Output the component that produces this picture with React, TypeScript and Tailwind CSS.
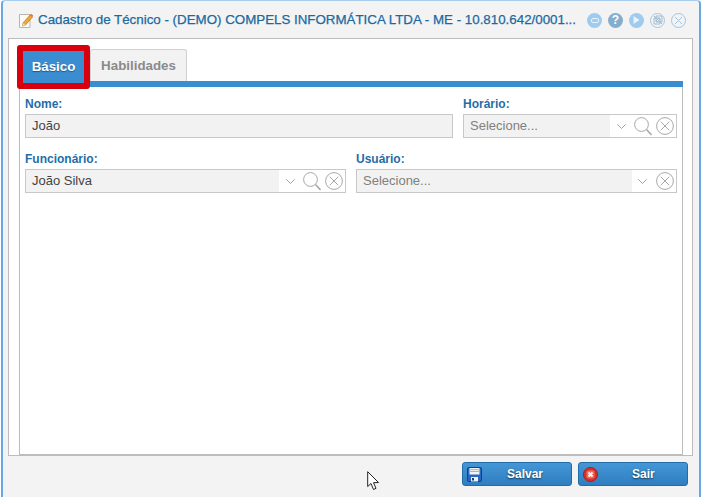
import React from "react";

const F = "font-['Liberation_Sans',Arial,sans-serif]";

function Chevron() {
  return (
    <svg width="9" height="5" viewBox="0 0 9 5" className="shrink-0" fill="none" stroke="#a3a3a3" strokeWidth="1">
      <path d="M0.3 0.3 L4.5 4.5 L8.7 0.3" />
    </svg>
  );
}
function SearchIcon() {
  return (
    <svg width="18" height="19" viewBox="0 0 18 19" className="ml-[8px] mt-[1px] shrink-0" fill="none" stroke="#a8a8a8">
      <circle cx="7.5" cy="7.5" r="6.9" strokeWidth="1" />
      <path d="M12.5 12.5 L17.5 18" strokeWidth="1.6" />
    </svg>
  );
}
function ClearIcon({ cls }: { cls: string }) {
  return (
    <svg width="18" height="18" viewBox="0 0 18 18" className={`${cls} shrink-0`} fill="none" stroke="#a8a8a8" strokeWidth="1">
      <circle cx="9" cy="9" r="8.4" />
      <path d="M4.7 4.7 L13.3 13.3 M13.3 4.7 L4.7 13.3" />
    </svg>
  );
}

function Label({ children }: { children: React.ReactNode }) {
  return <div className="h-[17px] text-[12px] leading-[15px] font-bold text-[#1f6ea8]">{children}</div>;
}

function Select({ label, value, search, width, grayWidth, placeholder }: { label: string; value: string; search?: boolean; width: string; grayWidth: string; placeholder?: boolean }) {
  return (
    <div className={width}>
      <Label>{label}</Label>
      <div className="flex h-[24px] items-stretch border border-[#c8c8c8] bg-white">
        <div className={`${grayWidth} flex items-center bg-[#f2f2f2] pl-[6px] text-[13px] ${placeholder ? "text-[#808080]" : "text-[#444444]"}`}>{value}</div>
        <div className="flex flex-1 items-center justify-end pr-[2px]">
          <Chevron />
          {search && <SearchIcon />}
          <ClearIcon cls={search ? "ml-[4px]" : "ml-[9px]"} />
        </div>
      </div>
    </div>
  );
}

function CircleBtn({ children, cls }: { children: React.ReactNode; cls: string }) {
  return <div className={`flex h-[15px] w-[15px] items-center justify-center rounded-full ${cls}`}>{children}</div>;
}

function Btn({ label, icon, width, pad }: { label: string; icon: React.ReactNode; width: string; pad: string }) {
  return (
    <div className={`relative flex h-[24px] ${width} items-center rounded-[3px] border border-[#1f6ea8] bg-gradient-to-b from-[#4596d6] to-[#2f7fc0] pl-[4px]`}>
      {icon}
      <span className={`${pad} text-[12px] font-bold text-white [text-shadow:0_1px_2px_rgba(0,0,0,0.6)]`}>{label}</span>
    </div>
  );
}

export default function App() {
  return (
    <div className={`${F} relative h-[497px] w-[702px] overflow-hidden bg-white`}>
      <div className="ml-px flex h-[497px] w-[700px] flex-col rounded-t-[4px] border-x-[2px] border-t border-x-[#69a9e1] border-t-[#a9cdec] bg-[#f3f3f3]">
        {/* Title bar */}
        <div className="flex h-[37px] shrink-0 items-center pl-[15px] pt-px">
          <svg width="16" height="17" viewBox="0 0 16 17" className="shrink-0">
            <path d="M1.5 2.5 H12 V15.5 H1.5 Z" fill="#fbfbfb" stroke="#b5b5b5" />
            <path d="M5 11 L12 3 L14.5 5 L7.5 13 L4.5 14 Z" fill="#efa82f" stroke="#b8771a" strokeWidth="0.7" />
            <path d="M12 3 L13 1.8 L15.2 3.6 L14.5 5 Z" fill="#e86d50" />
            <path d="M4.5 14 L5 11 L7.5 13 Z" fill="#f5dfb0" />
          </svg>
          <div className="ml-[4px] w-[540px] whitespace-nowrap text-[13.33px] font-medium text-[#1a699f] [-webkit-text-stroke:0.25px_#1a699f]">
            Cadastro de Técnico - (DEMO) COMPELS INFORMÁTICA LTDA - ME - 10.810.642/0001...
          </div>
          <div className="ml-[9px] flex items-center gap-[6px]">
            <CircleBtn cls="bg-[#9fcbee]">
              <div className="h-[5px] w-[8px] rounded-[2px] border border-[#e8f3fb]" />
            </CircleBtn>
            <CircleBtn cls="bg-[#85aecd] text-[12px] font-bold text-white">?</CircleBtn>
            <CircleBtn cls="bg-[#9fcbee]">
              <svg width="7" height="8" viewBox="0 0 7 8"><path d="M0.5 0 L6.5 4 L0.5 8 Z" fill="#e8f3fb" /></svg>
            </CircleBtn>
            <CircleBtn cls="border border-[#9fc6e6]">
              <svg width="10" height="10" viewBox="0 0 10 10" fill="none" stroke="#9ab4c9" strokeWidth="0.9">
                <path d="M1 3 H7 V9 H1 Z M3 1 H9 V7 H3 Z M1 1 L9 9 M3 5 L5 7 M5 3 L7 5" />
              </svg>
            </CircleBtn>
            <CircleBtn cls="border border-[#9fc6e6]">
              <svg width="9" height="9" viewBox="0 0 9 9" fill="none" stroke="#9fc6e6" strokeWidth="1"><path d="M1 1 L8 8 M8 1 L1 8" /></svg>
            </CircleBtn>
          </div>
        </div>

        {/* Content panel */}
        <div className="ml-[5px] flex h-[418px] w-[685px] flex-col border border-[#bdbdbd] bg-white pl-[10px] pr-[9px]">
          {/* Tabs */}
          <div className="relative flex h-[42px] shrink-0 items-end">
            <div className="h-[32px] w-[62px]" />
            <div className="ml-[9px] flex h-[32px] w-[97px] items-center justify-center rounded-t-[3px] border border-b-0 border-[#d0d0d0] bg-[#f2f2f2] text-[13.33px] font-bold text-[#8a8a8a]">
              Habilidades
            </div>
            <div className="absolute left-[-2px] top-[6px] z-10 flex h-[44px] w-[73px] items-center justify-center rounded-[3px] border-[6px] border-[#d9000d] bg-[#3a8dd1] text-[13.33px] font-bold text-white [text-shadow:0_1px_1px_rgba(0,0,0,0.4)]">
              Básico
            </div>
          </div>
          <div className="h-[6px] shrink-0 bg-[#3a8dd1]" />
          {/* Tab body */}
          <div className="flex flex-1 flex-col gap-[14px] border-x border-b border-[#bdbdbd] px-[5px] pt-[10px]">
            <div className="flex gap-[10px]">
              <div className="w-[428px]">
                <Label>Nome:</Label>
                <div className="flex h-[24px] items-center border border-[#c8c8c8] bg-[#f2f2f2] pl-[6px] text-[13px] text-[#444444]">João</div>
              </div>
              <Select label="Horário:" value="Selecione..." search placeholder width="w-[214px]" grayWidth="w-[146px]" />
            </div>
            <div className="flex gap-[10px]">
              <Select label="Funcionário:" value="João Silva" search width="w-[321px]" grayWidth="w-[253px]" />
              <Select label="Usuário:" value="Selecione..." placeholder width="w-[321px]" grayWidth="w-[275px]" />
            </div>
          </div>
        </div>

        {/* Footer */}
        <div className="flex flex-1 items-start justify-end gap-[6px] pr-[11px] pt-[6px]">
          <Btn
            label="Salvar"
            width="w-[110px]"
            pad="ml-[25px]"
            icon={
              <svg width="15" height="15" viewBox="0 0 15 15" className="shrink-0">
                <rect x="0.5" y="0.5" width="14" height="14" rx="1.5" fill="#2a66c0" stroke="#1a3f80" />
                <rect x="2.5" y="1" width="10" height="6.5" fill="#f1f3f6" />
                <path d="M3 2.7 H12 M3 4.5 H12" stroke="#a9b4c4" />
                <rect x="4" y="10" width="7" height="4.5" fill="#eef1f6" />
                <rect x="5" y="11" width="2" height="2.5" fill="#1a3f80" />
              </svg>
            }
          />
          <Btn
            label="Sair"
            width="w-[110px]"
            pad="ml-[34px]"
            icon={
              <svg width="15" height="15" viewBox="0 0 15 15" className="shrink-0">
                <circle cx="7.5" cy="7.5" r="7" fill="#d6322c" stroke="#a31e1a" />
                <rect x="3.5" y="3.5" width="8" height="8" rx="2" fill="#f26a5f" />
                <path d="M5.5 5.5 L9.5 9.5 M9.5 5.5 L5.5 9.5" stroke="#fff" strokeWidth="1.8" />
              </svg>
            }
          />
        </div>
      </div>

      {/* Mouse cursor */}
      <svg width="13" height="20" viewBox="0 0 13 20" className="absolute left-[367px] top-[471px]">
        <path d="M0.7 0.7 L0.7 15.5 L4 12.5 L6.5 18.5 L9 17.3 L6.5 11.7 L11.5 11.5 Z" fill="#fff" stroke="#222" strokeWidth="1" />
      </svg>
    </div>
  );
}
